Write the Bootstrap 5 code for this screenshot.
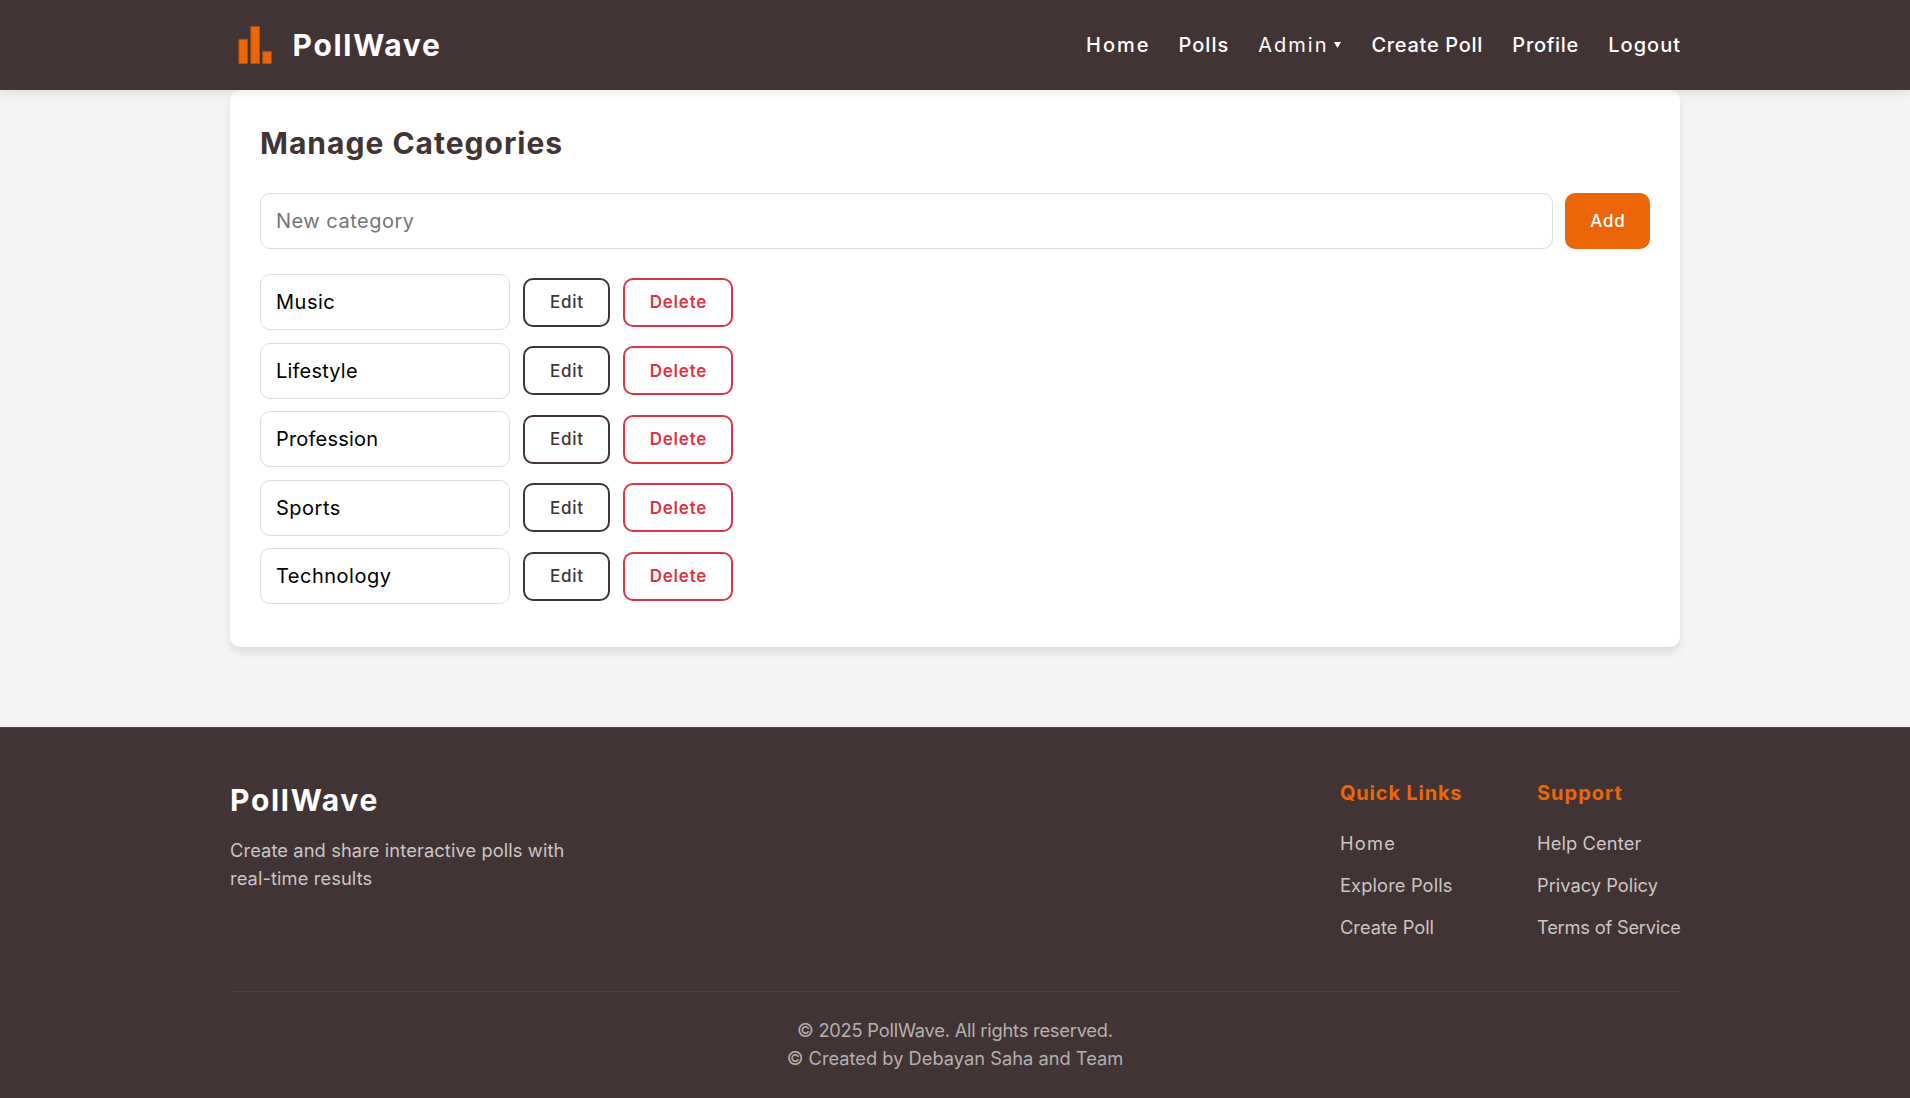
<!DOCTYPE html>
<html lang="en">
<head>
<meta charset="utf-8">
<meta name="viewport" content="width=device-width, initial-scale=1">
<title>PollWave - Manage Categories</title>
<link href="https://cdn.jsdelivr.net/npm/bootstrap@5.3.0/dist/css/bootstrap.min.css" rel="stylesheet">
<style>
:root{--pw-dark:#423434;--pw-orange:#ec6608;--pw-red:#dc3545;--ls:0px}
body{font-family:Inter,"Liberation Sans",sans-serif;background:#f4f4f4;font-size:20px;min-height:100vh;overflow-x:hidden}
.pw-wrap{width:1450px;margin:0 auto}
/* tracked text: trailing spacing is removed from the box */
.tk{display:inline-block;letter-spacing:var(--ls);margin-right:calc(-1*var(--ls));white-space:nowrap}
.ls-neg{--ls:-.22px}.ls-0{--ls:0px}.ls-1{--ls:.12px}.ls-2{--ls:.2px}.ls-5{--ls:.5px}.ls-7{--ls:.7px}.ls-8{--ls:.8px}
.ls-10{--ls:1px}.ls-12{--ls:1.2px}.ls-17{--ls:1.7px}.ls-20{--ls:2px}
.pw-header{height:90px;background:var(--pw-dark);box-shadow:0 2px 10px rgba(0,0,0,.1);position:relative;z-index:5}
.pw-header a,.pw-footer a{text-decoration:none}
.pw-header a{color:#fff}
.pw-brand{font-size:30px;font-weight:700;line-height:44px;color:#fff}
.pw-logo{width:50px;height:50px;margin-right:12.5px}
.pw-nav{gap:30px;font-weight:500;line-height:30px}
.pw-nav .caret{width:7px;height:6px;margin-left:8px}
.pw-card{background:#fff;border-radius:10px;padding:31px 30px 43px;box-shadow:0 5px 8px rgba(0,0,0,.1)}
.pw-title{font-size:30px;font-weight:700;line-height:44px;color:var(--pw-dark);margin:0 0 28px}
.pw-form{gap:12.5px;margin-bottom:25px}
.pw-input{height:56px;border:1px solid #ddd;border-radius:10px;padding:0 15px;font-size:20px;color:#000;letter-spacing:var(--ls)}
.pw-input::placeholder{color:#757575;opacity:1}
.pw-input.short{width:250px}
.pw-rows{gap:12.5px}
.pw-row{gap:13px;height:56px}
.pw-btn{font-size:17px;line-height:26px;border-radius:10px;border:2px solid;padding:0;height:49px;font-weight:500}
.pw-add,.pw-add:hover{height:56px;width:85px;background:var(--pw-orange);border-color:var(--pw-orange);color:#fff}
.pw-edit{width:87px;border-color:var(--pw-dark);color:var(--pw-dark)}
.pw-delete{width:110px;border-color:var(--pw-red);color:var(--pw-red);font-weight:600}
.pw-footer{margin-top:80px;background:var(--pw-dark);border-top:1px solid #544647;padding:51px 0 30px}
.pw-about{width:375px;font-size:18.3px;line-height:28px;color:#cac6c6}
.pw-about .pw-brand{margin-bottom:14px;line-height:43px}
.pw-about p{letter-spacing:.1px}
.pw-col{font-size:18.3px;line-height:28px}
.pw-col.quick{width:197px}
.pw-col.support{width:143px}
.pw-col h4{font-size:20px;font-weight:700;line-height:28px;color:var(--pw-orange);margin:0 0 22px}
.pw-col ul{gap:14px}
.pw-col a{color:#cac6c6}
.pw-col li,.pw-col h4,.pw-copy>div{height:28px}
.pw-copy{border-top:1px solid #4e4040;margin-top:50px;padding-top:24px;font-size:18.3px;line-height:28px;color:#b5b0b0;height:107px;margin-bottom:-30px}
</style>
</head>
<body>
<header class="pw-header">
  <div class="pw-wrap h-100 d-flex justify-content-between align-items-center">
    <a href="#" class="pw-brand d-flex align-items-center">
      <svg class="pw-logo" viewBox="0 0 50 50" aria-hidden="true"><g fill="#ec6608" stroke="#a45320" stroke-width=".8"><path d="M8.9 19.3h8.6v24.3H8.9zM20.8 6.4h8.7v37.2h-8.7zM32.7 31.4h8.6v12.2h-8.6z"/></g></svg>
      <span class="tk ls-17">PollWave</span>
    </a>
    <ul class="pw-nav d-flex list-unstyled mb-0">
      <li><a href="#" class="tk ls-20">Home</a></li>
      <li><a href="#" class="tk ls-10">Polls</a></li>
      <li class="d-flex align-items-center"><a href="#" class="tk ls-20 fw-normal">Admin</a><svg class="caret" viewBox="0 0 7 6" aria-hidden="true"><path d="M0 0h7L3.5 6z" fill="#fff"/></svg></li>
      <li><a href="#" class="tk ls-7">Create Poll</a></li>
      <li><a href="#" class="tk ls-7">Profile</a></li>
      <li><a href="#" class="tk ls-10">Logout</a></li>
    </ul>
  </div>
</header>

<main class="pw-wrap">
  <section class="pw-card">
    <h2 class="pw-title"><span class="tk ls-10">Manage Categories</span></h2>
    <form class="pw-form d-flex">
      <input type="text" class="form-control pw-input ls-5" placeholder="New category">
      <button type="button" class="btn pw-btn pw-add flex-shrink-0"><span class="tk ls-8">Add</span></button>
    </form>
    <div class="pw-rows d-flex flex-column">
      <div class="pw-row d-flex align-items-center">
        <input type="text" class="form-control pw-input short ls-5" value="Music">
        <button type="button" class="btn pw-btn pw-edit"><span class="tk ls-8">Edit</span></button>
        <button type="button" class="btn pw-btn pw-delete"><span class="tk ls-8">Delete</span></button>
      </div>
      <div class="pw-row d-flex align-items-center">
        <input type="text" class="form-control pw-input short ls-2" value="Lifestyle">
        <button type="button" class="btn pw-btn pw-edit"><span class="tk ls-8">Edit</span></button>
        <button type="button" class="btn pw-btn pw-delete"><span class="tk ls-8">Delete</span></button>
      </div>
      <div class="pw-row d-flex align-items-center">
        <input type="text" class="form-control pw-input short ls-2" value="Profession">
        <button type="button" class="btn pw-btn pw-edit"><span class="tk ls-8">Edit</span></button>
        <button type="button" class="btn pw-btn pw-delete"><span class="tk ls-8">Delete</span></button>
      </div>
      <div class="pw-row d-flex align-items-center">
        <input type="text" class="form-control pw-input short ls-5" value="Sports">
        <button type="button" class="btn pw-btn pw-edit"><span class="tk ls-8">Edit</span></button>
        <button type="button" class="btn pw-btn pw-delete"><span class="tk ls-8">Delete</span></button>
      </div>
      <div class="pw-row d-flex align-items-center">
        <input type="text" class="form-control pw-input short ls-5" value="Technology">
        <button type="button" class="btn pw-btn pw-edit"><span class="tk ls-8">Edit</span></button>
        <button type="button" class="btn pw-btn pw-delete"><span class="tk ls-8">Delete</span></button>
      </div>
    </div>
  </section>
</main>

<footer class="pw-footer">
  <div class="pw-wrap">
    <div class="d-flex justify-content-between">
      <div class="pw-about">
        <div class="pw-brand"><span class="tk ls-17">PollWave</span></div>
        <p class="mb-0">Create and share interactive polls with real-time results</p>
      </div>
      <div class="d-flex">
        <div class="pw-col quick">
          <h4><span class="tk ls-8">Quick Links</span></h4>
          <ul class="list-unstyled d-flex flex-column mb-0">
            <li><a href="#" class="tk ls-12">Home</a></li>
            <li><a href="#" class="tk ls-1">Explore Polls</a></li>
            <li><a href="#" class="tk ls-0">Create Poll</a></li>
          </ul>
        </div>
        <div class="pw-col support">
          <h4><span class="tk ls-10">Support</span></h4>
          <ul class="list-unstyled d-flex flex-column mb-0">
            <li><a href="#" class="tk ls-1">Help Center</a></li>
            <li><a href="#" class="tk ls-0">Privacy Policy</a></li>
            <li><a href="#" class="tk ls-neg">Terms of Service</a></li>
          </ul>
        </div>
      </div>
    </div>
    <div class="pw-copy text-center">
      <div><span class="tk ls-neg">© 2025 PollWave. All rights reserved.</span></div>
      <div><span class="tk ls-0">© Created by Debayan Saha and Team</span></div>
    </div>
  </div>
</footer>
<script src="https://cdn.jsdelivr.net/npm/bootstrap@5.3.0/dist/js/bootstrap.bundle.min.js"></script>
</body>
</html>
